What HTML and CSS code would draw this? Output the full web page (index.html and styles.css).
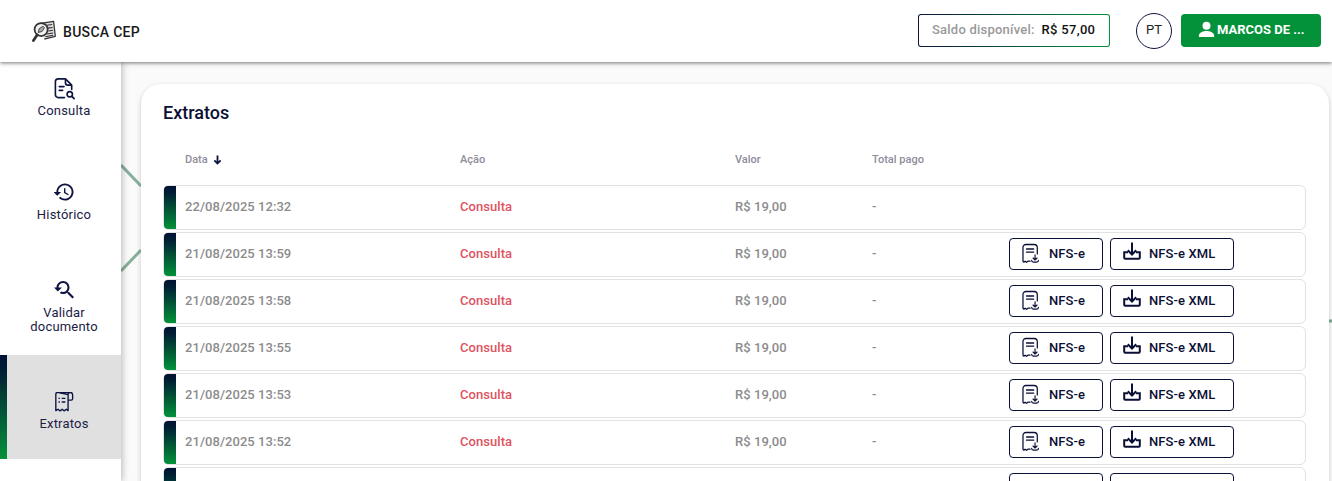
FILE: index.html
```html
<!DOCTYPE html>
<html lang="pt">
<head>
<meta charset="utf-8">
<title>Busca CEP - Extratos</title>
<link rel="stylesheet" href="styles.css">
</head>
<body>
<svg width="0" height="0" class="defs">
  <defs>
    <symbol id="i-nfse" viewBox="0 0 20 22">
      <path d="M9 19.600H6.600l-1.500 1.200-1.600-1.200-1.500 1c-.6-.2-.9-.6-.9-1.200V4.500C1 2.300 2.300 1 4.500 1h9C15.700 1 17 2.300 17 4.500v7" fill="none" stroke="currentColor" stroke-width="1.400" stroke-linecap="round" stroke-linejoin="round"/>
      <path d="M5 6h8M5 9.500h8" fill="none" stroke="currentColor" stroke-width="1.400" stroke-linecap="round"/>
      <path d="M14.500 12.500v5.500M12.300 16l2.200 2.200 2.200-2.200M10.700 18.500c0 1.300.8 2 2 2h3.600c1.200 0 2-.7 2-2" fill="none" stroke="currentColor" stroke-width="1.300" stroke-linecap="round" stroke-linejoin="round"/>
    </symbol>
    <symbol id="i-xml" viewBox="0 0 18 18">
      <path d="M9 .5v12M4.800 8.300 9 12.500l4.200-4.200" fill="none" stroke="currentColor" stroke-width="2"/>
      <path d="M5 10.200H1.200v5.600c0 .6.4 1 1 1h13.600c.6 0 1-.4 1-1v-5.600H13" fill="none" stroke="currentColor" stroke-width="2"/>
    </symbol>
  </defs>
</svg>

<header class="topbar">
  <div class="brand">
    <svg class="brand-icon" viewBox="0 0 25 23" aria-hidden="true">
      <path d="M9 3 22.500 1l1.800 15.500-11.500 3" fill="#dcdcdc" stroke="#333" stroke-width="1.300" stroke-linejoin="round"/>
      <path d="M15.500 5l5.500-.8M16.500 8l5-.7M17 11l4.800-.7M15.500 14l6.500-1M14 17l8-1.700" stroke="#333" stroke-width="1.100"/>
      <circle cx="9.500" cy="9.500" r="6.800" fill="#f2f2f2" stroke="#333" stroke-width="1.800"/>
      <path d="M6.500 12.500l1-4 4-2.500 1.500 1.500-2.500 4z" fill="#aaa" stroke="#333" stroke-width=".9"/>
      <path d="M5.500 15 1.500 21" stroke="#333" stroke-width="2.800" stroke-linecap="round"/>
    </svg>
    <span class="brand-name">BUSCA CEP</span>
  </div>
  <div class="top-actions">
    <div class="balance"><span class="balance-label">Saldo disponível:</span><span class="balance-value">R$ 57,00</span></div>
    <button class="lang">PT</button>
    <button class="user">
      <svg class="user-icon" viewBox="0 0 18 18" aria-hidden="true"><circle cx="9" cy="5" r="4.200" fill="#fff"/><path d="M1 17v-2c0-3 5-4.500 8-4.500s8 1.500 8 4.500v2z" fill="#fff"/></svg>
      <span>MARCOS DE ...</span>
    </button>
  </div>
</header>

<div class="shell">
  <nav class="sidebar">
    <a class="nav-item nav-first">
      <svg class="nav-icon nav-icon-large" viewBox="0 0 24 24" aria-hidden="true">
        <path d="M12 21.500H5.500A3 3 0 0 1 2.500 18.500V5A3 3 0 0 1 5.500 2h7.500l6.500 6.500V13" fill="none" stroke="#0e1440" stroke-width="1.700" stroke-linecap="round" stroke-linejoin="round"/>
        <path d="M13 2.500V6a2.500 2.500 0 0 0 2.500 2.500h3.500" fill="none" stroke="#0e1440" stroke-width="1.700"/>
        <path d="M6.500 10h5M6.500 14h3.500" stroke="#0e1440" stroke-width="1.700" stroke-linecap="round"/>
        <circle cx="17.500" cy="18" r="2.800" fill="none" stroke="#0e1440" stroke-width="1.700"/>
        <path d="m19.700 20.200 2.300 2.300" stroke="#0e1440" stroke-width="1.900" stroke-linecap="round"/>
      </svg>
      <span>Consulta</span>
    </a>
    <a class="nav-item nav-history">
      <svg class="nav-icon" viewBox="1.500 2 21 20" aria-hidden="true">
        <path d="M13 3c-4.970 0-9 4.030-9 9H1l3.890 3.890.07.140L9 12H6c0-3.870 3.130-7 7-7s7 3.130 7 7-3.130 7-7 7c-1.930 0-3.680-.79-4.940-2.060l-1.420 1.420C8.270 19.990 10.510 21 13 21c4.970 0 9-4.030 9-9s-4.030-9-9-9zm-1 5v5l4.280 2.540.72-1.210-3.500-2.080V8H12z" fill="#0e1440"/>
      </svg>
      <span>Histórico</span>
    </a>
    <a class="nav-item nav-validate">
      <svg class="nav-icon" viewBox="2 2 20 20" aria-hidden="true">
        <path d="M17.010 14h-.8l-.27-.27c.98-1.140 1.570-2.610 1.570-4.230 0-3.590-2.910-6.500-6.500-6.500s-6.500 3-6.500 6.500H2l3.840 4 4.160-4H6.510C6.510 7 8.530 5 11.010 5s4.490 2.010 4.490 4.500c0 2.480-2.010 4.500-4.490 4.500-.65 0-1.260-.14-1.820-.38L7.710 15.100c.97.570 2.090.9 3.300.9 1.610 0 3.080-.59 4.220-1.570l.27.27v.79l5.010 5L21.990 19l-4.980-5z" fill="#0e1440"/>
      </svg>
      <span>Validar<br>documento</span>
    </a>
    <a class="nav-item nav-active">
      <svg class="nav-icon" viewBox="2 1 21 22" aria-hidden="true">
        <path d="M5 1.500h14.500c1.500 0 2.500 1.200 2.500 2.700v4.300c0 1-.6 1.500-1.500 1.500H17M17 3.800V21.500l-2-1.500-2.300 1.800-2.200-1.800-2.300 1.800L6 20l-2.500 1.500V3.500C3.500 2.300 4 1.500 5 1.500zM17 3.800c0-1.400 1-2.300 2.500-2.300" fill="none" stroke="#0e1440" stroke-width="1.500" stroke-linejoin="round"/>
        <path d="M6.500 8h1.500M10 8h4M6.500 12h1.500M10 12h4" stroke="#0e1440" stroke-width="1.600"/>
      </svg>
      <span>Extratos</span>
    </a>
  </nav>

  <main class="content">
    <svg class="backdrop" viewBox="0 0 1211 419" aria-hidden="true">
      <path d="M0 103 20 124M0 209 20 188" stroke="#86b09b" stroke-width="3" fill="none"/>
      <path d="M1208 259h3" stroke="#7fa893" stroke-width="3" fill="none"/>
    </svg>
    <section class="card">
      <h1 class="title">Extratos</h1>
      <div class="table-head">
        <div class="cell-date">Data
          <svg class="sort" viewBox="0 0 10 11" aria-hidden="true"><path d="M5 .5v9M1.500 6 5 9.500 8.500 6" fill="none" stroke="#0e1440" stroke-width="2"/></svg>
        </div>
        <div class="cell-action">Ação</div>
        <div class="cell-value">Valor</div>
        <div class="cell-paid">Total pago</div>
      </div>
      <div class="rows">
        <div class="row">
          <div class="cell-date">22/08/2025 12:32</div><div class="cell-action">Consulta</div><div class="cell-value">R$ 19,00</div><div class="cell-paid">-</div>
        </div>
        <div class="row">
          <div class="cell-date">21/08/2025 13:59</div><div class="cell-action">Consulta</div><div class="cell-value">R$ 19,00</div><div class="cell-paid">-</div>
          <div class="cell-buttons">
            <button class="doc-btn doc-nfse"><svg class="doc-icon"><use href="#i-nfse"/></svg>NFS-e</button>
            <button class="doc-btn doc-xml"><svg class="xml-icon"><use href="#i-xml"/></svg>NFS-e XML</button>
          </div>
        </div>
        <div class="row">
          <div class="cell-date">21/08/2025 13:58</div><div class="cell-action">Consulta</div><div class="cell-value">R$ 19,00</div><div class="cell-paid">-</div>
          <div class="cell-buttons">
            <button class="doc-btn doc-nfse"><svg class="doc-icon"><use href="#i-nfse"/></svg>NFS-e</button>
            <button class="doc-btn doc-xml"><svg class="xml-icon"><use href="#i-xml"/></svg>NFS-e XML</button>
          </div>
        </div>
        <div class="row">
          <div class="cell-date">21/08/2025 13:55</div><div class="cell-action">Consulta</div><div class="cell-value">R$ 19,00</div><div class="cell-paid">-</div>
          <div class="cell-buttons">
            <button class="doc-btn doc-nfse"><svg class="doc-icon"><use href="#i-nfse"/></svg>NFS-e</button>
            <button class="doc-btn doc-xml"><svg class="xml-icon"><use href="#i-xml"/></svg>NFS-e XML</button>
          </div>
        </div>
        <div class="row">
          <div class="cell-date">21/08/2025 13:53</div><div class="cell-action">Consulta</div><div class="cell-value">R$ 19,00</div><div class="cell-paid">-</div>
          <div class="cell-buttons">
            <button class="doc-btn doc-nfse"><svg class="doc-icon"><use href="#i-nfse"/></svg>NFS-e</button>
            <button class="doc-btn doc-xml"><svg class="xml-icon"><use href="#i-xml"/></svg>NFS-e XML</button>
          </div>
        </div>
        <div class="row">
          <div class="cell-date">21/08/2025 13:52</div><div class="cell-action">Consulta</div><div class="cell-value">R$ 19,00</div><div class="cell-paid">-</div>
          <div class="cell-buttons">
            <button class="doc-btn doc-nfse"><svg class="doc-icon"><use href="#i-nfse"/></svg>NFS-e</button>
            <button class="doc-btn doc-xml"><svg class="xml-icon"><use href="#i-xml"/></svg>NFS-e XML</button>
          </div>
        </div>
        <div class="row row-partial">
          <div class="cell-buttons">
            <div class="doc-btn doc-nfse"></div>
            <div class="doc-btn doc-xml"></div>
          </div>
        </div>
      </div>
    </section>
  </main>
</div>
</body>
</html>
```

FILE: styles.css
```css
* { box-sizing: border-box; }
html, body { margin: 0; height: 481px; overflow: hidden; }
body { font-family: Roboto, "Liberation Sans", sans-serif; background: #fafafa; color: #0e1440; }
button { font-family: inherit; cursor: pointer; }
.defs { position: absolute; }

.topbar {
  position: relative; z-index: 3;
  height: 62px; background: #fff;
  box-shadow: 0 1px 4px rgba(0,0,0,.55);
  display: flex; align-items: center; justify-content: space-between;
  padding: 0 11px 1px 32px;
}
.brand { display: flex; align-items: center; gap: 7px; margin-top: 2px; }
.brand-icon { width: 24px; height: 23px; }
.brand-name { font-size: 14px; font-weight: 500; color: #1a1a1a; letter-spacing: .3px; }
.top-actions { display: flex; align-items: center; }
.balance {
  width: 192px; height: 33px;
  display: flex; align-items: center; padding: 0 0 2px 13px; gap: 7px;
  border: 1px solid transparent; border-radius: 3px;
  background: linear-gradient(#fff,#fff) padding-box, linear-gradient(90deg,#0e1440,#03923a) border-box;
  font-size: 13px; font-weight: 500;
}
.balance-label { color: #999; letter-spacing: .22px; }
.balance-value { color: #111; letter-spacing: .3px; }
.lang {
  width: 36px; height: 36px; margin-left: 26px;
  border: 1px solid #0e1440; border-radius: 50%; background: #fff;
  font-size: 13px; color: #222; padding: 0 0 2px;
}
.user {
  width: 140px; height: 33px; margin-left: 9px;
  background: #03923a; color: #fff; border: 0; border-radius: 4px;
  display: flex; align-items: center; padding: 0 0 2px 17px; gap: 2px;
  font-size: 13px; font-weight: 700;
}
.user-icon { width: 17px; height: 17px; }

.shell { display: flex; height: 419px; }
.sidebar {
  position: relative; z-index: 2;
  width: 121px; flex: none; background: #fff; overflow: hidden;
  box-shadow: 2px 0 6px rgba(0,0,0,.22);
}
.nav-item {
  height: 104px; display: flex; flex-direction: column; align-items: center; justify-content: center;
  gap: 6px; text-align: center; font-size: 13px; line-height: 14px; color: #1b2145; letter-spacing: .2px;
  position: relative; padding-left: 7px;
}
.nav-first { height: 85px; justify-content: flex-end; padding-bottom: 29px; gap: 4px; }
.nav-history { padding-top: 6px; }
.nav-validate { padding-top: 8px; }
.nav-active { background: #e0e0e0; padding-top: 9px; gap: 5px; }
.nav-active::before {
  content: ""; position: absolute; left: 0; top: 0; bottom: 0; width: 7px;
  background: linear-gradient(#001233 0%, #001e33 15%, #03923a 100%);
}
.nav-icon { width: 20px; height: 20px; }
.nav-icon-large { width: 23px; height: 23px; }

.content { position: relative; flex: 1; padding: 22px 3px 0 20px; min-width: 0; }
.backdrop { position: absolute; left: 0; top: 0; width: 100%; height: 100%; }
.card {
  position: relative; height: 500px;
  background: #fff; border-radius: 20px 20px 0 0;
  box-shadow: 0 2px 5px rgba(0,0,0,.2);
  padding: 18px 23px 0 22px;
}
.title { margin: 0; font-size: 18px; line-height: 22px; font-weight: 500; color: #0a0f35; }
.table-head {
  display: grid; grid-template-columns: 275px 275px 137px 137px 1fr;
  padding-left: 22px; height: 47px; margin: 12px 0 2px; align-items: center;
  font-size: 11px; font-weight: 500; color: #8d8d9b;
}
.table-head .cell-date { display: flex; align-items: center; gap: 5px; }
.sort { width: 9px; height: 10px; }
.rows { display: flex; flex-direction: column; gap: 2px; }
.row {
  position: relative; height: 45px; flex: none;
  display: grid; grid-template-columns: 275px 275px 137px 137px 1fr; align-items: center;
  padding-left: 21px;
  border: 1.500px solid #e2e2e2; border-radius: 6px; background: #fff;
  font-size: 13px; font-weight: 500; color: #8c8c8c; letter-spacing: .05px;
}
.row::before {
  content: ""; position: absolute; left: 0; top: 0; bottom: 0; width: 12px;
  background: linear-gradient(#001233 0%, #001e33 15%, #03923a 100%); border-radius: 4px 0 0 4px;
}
.row .cell-date, .row .cell-action, .row .cell-value, .row .cell-paid { padding-bottom: 2px; }
.row .cell-action { color: #e0525e; }
.row-partial .cell-buttons { grid-column: 5; }
.cell-buttons { display: flex; gap: 7px; margin-bottom: 2px; }
.doc-btn {
  height: 32px; background: #fff; border: 1px solid #0a0f35; border-radius: 4px;
  display: flex; align-items: center; padding: 0; color: #0a0f35;
  font-size: 13px; font-weight: 500; letter-spacing: .1px;
}
.doc-nfse { width: 94px; padding-left: 12px; gap: 9px; }
.doc-xml { width: 124px; padding-left: 12px; gap: 8px; }
.doc-icon { width: 18px; height: 21px; }
.xml-icon { width: 18px; height: 18px; margin-bottom: 5px; }
```
